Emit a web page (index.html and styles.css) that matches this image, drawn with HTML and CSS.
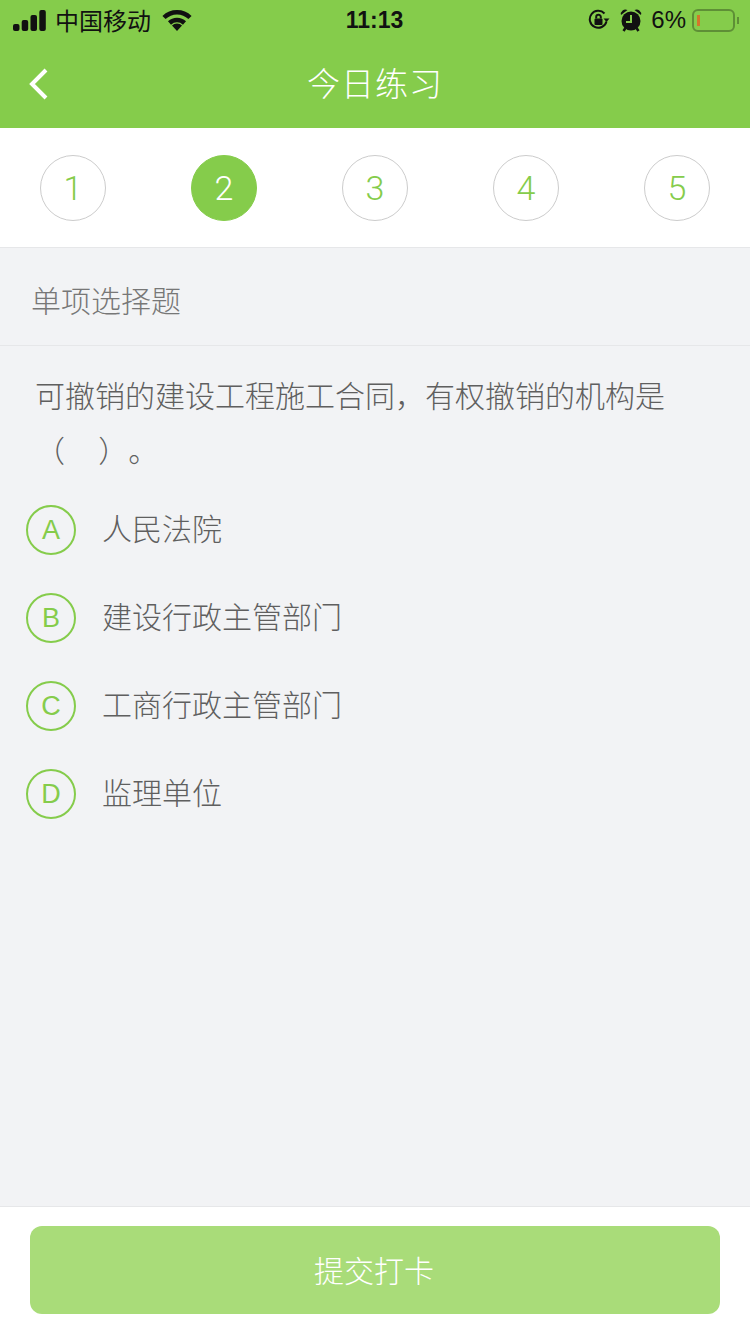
FILE: index.html
```html
<!DOCTYPE html>
<html lang="zh-CN">
<head>
    <meta charset="UTF-8">
    <meta name="viewport" content="width=device-width, initial-scale=1.0">
    <title>今日练习</title>
    <link rel="stylesheet" href="styles.css">
</head>
<body>
    <div class="page">
        <header class="top">
            <div class="status">
                <div class="status-left">
                    <svg class="signal" width="33" height="21" viewBox="0 0 33 21">
                        <rect x="0" y="14" width="6.500" height="7" rx="2"/>
                        <rect x="8.700" y="10" width="6.500" height="11" rx="2"/>
                        <rect x="17.500" y="5" width="6.500" height="16" rx="2"/>
                        <rect x="26.300" y="0" width="6.500" height="21" rx="2"/>
                    </svg>
                    <span class="carrier">中国移动</span>
                    <svg class="wifi" width="30" height="22" viewBox="0 0 30 22">
                        <path class="wifi-arc" d="M2 8.500a18.500 18.500 0 0 1 26 0"/>
                        <path class="wifi-arc" d="M7.500 14a11 11 0 0 1 15 0"/>
                        <path d="M15 22l-5-5.500a7 7 0 0 1 10 0z"/>
                    </svg>
                </div>
                <div class="time">11:13</div>
                <div class="status-right">
                    <svg class="lock" width="22" height="22" viewBox="0 0 22 22">
                        <path class="lock-ring" d="M18.500 12.500A8.500 8.500 0 1 1 16.500 4.500"/>
                        <path d="M15.500 9.500h6l-3 3.500z"/>
                        <rect x="6.500" y="9.500" width="8" height="6.500" rx="1"/>
                        <path class="lock-hook" d="M8.200 9.500V8a2.300 2.300 0 0 1 4.600 0v1.500"/>
                    </svg>
                    <svg class="alarm" width="22" height="24" viewBox="0 0 22 24">
                        <circle cx="11" cy="13" r="9.500"/>
                        <path d="M1 7a4.500 4.500 0 0 1 6.500-5zM21 7a4.500 4.500 0 0 0-6.500-5z"/>
                        <path class="alarm-foot" d="M3.500 23l2-3M18.500 23l-2-3"/>
                        <path class="alarm-hand" d="M11 7v7H6"/>
                    </svg>
                    <span class="percent">6%</span>
                    <div class="battery"><div class="battery-level"></div></div>
                    <div class="battery-cap"></div>
                </div>
            </div>
            <nav class="bar">
                <svg class="back" width="20" height="32" viewBox="0 0 20 32">
                    <path d="M17 2L3 16l14 14"/>
                </svg>
                <h1>今日练习</h1>
            </nav>
        </header>

        <div class="steps">
            <div class="step">1</div>
            <div class="step active">2</div>
            <div class="step">3</div>
            <div class="step">4</div>
            <div class="step">5</div>
        </div>

        <main class="content">
            <div class="type">单项选择题</div>
            <p class="question">可撤销的建设工程施工合同，有权撤销的机构是（&nbsp;&nbsp;&nbsp;&nbsp;）。</p>
            <ul class="options">
                <li class="option"><span class="letter">A</span><span class="option-text">人民法院</span></li>
                <li class="option"><span class="letter">B</span><span class="option-text">建设行政主管部门</span></li>
                <li class="option"><span class="letter">C</span><span class="option-text">工商行政主管部门</span></li>
                <li class="option"><span class="letter">D</span><span class="option-text">监理单位</span></li>
            </ul>
        </main>

        <footer class="foot">
            <button class="submit">提交打卡</button>
        </footer>
    </div>
</body>
</html>
```

FILE: styles.css
```css
:root {
    --green: #85cc4b;
    --green-light: #a9dc79;
    --bg: #f2f3f5;
    --line: #e6e7e9;
    --text: #5f5f5f;
}
* { box-sizing: border-box; }
html, body { margin: 0; height: 100%; }
body { font-family: "Liberation Sans", "Noto Sans CJK SC", sans-serif; background-color: var(--bg); color: var(--text); text-spacing-trim: space-all; }
.page { height: 1334px; display: flex; flex-direction: column; overflow: hidden; }

/* Cabecera */
.top { background-color: var(--green); height: 128px; flex: none; }
.status { height: 40px; display: grid; grid-template-columns: 1fr auto 1fr; align-items: center; padding: 0 10px 0 13px; color: #111; }
.status-left, .status-right { display: flex; align-items: center; }
.status-right { justify-content: flex-end; }
.signal, .wifi, .alarm { fill: #111; }
.carrier { font-size: 24px; margin-left: 9px; margin-right: 11px; padding-bottom: 2px; }
.wifi-arc { fill: none; stroke: #111; stroke-width: 4.500; }
.time { font-size: 23px; font-weight: 700; margin-right: 4px; }
.lock { fill: #111; margin-right: 10px; }
.lock-ring, .lock-hook { fill: none; stroke: #111; stroke-width: 2; }
.alarm { margin-right: 9px; }
.alarm-foot { fill: none; stroke: #111; stroke-width: 2.500; }
.alarm-hand { fill: none; stroke: var(--green); stroke-width: 2; }
.percent { font-size: 24px; margin-right: 6px; }
.battery { width: 43px; height: 23px; border: 2px solid #5e8f36; border-radius: 6px; padding: 4px 3px; }
.battery-level { width: 3px; height: 100%; background-color: #d2762b; }
.battery-cap { width: 2px; height: 7px; margin-left: 2px; margin-right: 1px; background-color: #5e8f36; }

.bar { height: 88px; position: relative; display: flex; align-items: center; justify-content: center; padding-bottom: 4px; }
.bar h1 { margin: 0; font-size: 33px; font-weight: 300; color: #fff; letter-spacing: 1px; }
.back { position: absolute; left: 29px; top: 28px; fill: none; stroke: #fff; stroke-width: 4; }

/* Pasos */
.steps { flex: none; height: 120px; padding: 27px 40px 0; display: flex; justify-content: space-between; background-color: #fff; border-bottom: 1px solid var(--line); }
.step { width: 66px; height: 66px; border-radius: 50%; border: 1px solid #ccc; color: var(--green); font-family: Roboto, sans-serif; font-weight: 300; font-size: 34px; display: flex; align-items: center; justify-content: center; }
.step.active { background-color: var(--green); border-color: var(--green); color: #fff; }

/* Pregunta */
.content { flex: 1; }
.type { height: 98px; padding: 4px 0 0 31px; display: flex; align-items: center; font-size: 30px; font-weight: 300; color: #777; border-bottom: 1px solid var(--line); }
.question { margin: 23px 0 0; padding: 0 36px 0 35px; font-size: 30px; line-height: 55px; font-weight: 300; }
.options { list-style: none; margin: 7px 0 0; padding: 0 0 0 26px; }
.option { height: 88px; display: flex; align-items: center; gap: 26px; font-size: 30px; font-weight: 300; }
.option-text { padding-bottom: 6px; }
.letter { width: 50px; height: 50px; flex: none; border-radius: 50%; border: 2px solid var(--green); color: var(--green); font-size: 27px; font-weight: 400; display: flex; align-items: center; justify-content: center; }

/* Pie */
.foot { flex: none; height: 128px; padding: 19px 30px 0; background-color: #fff; border-top: 1px solid var(--line); }
.submit { display: block; width: 100%; height: 88px; padding: 0 2px 2px 0; border: none; border-radius: 12px; background-color: var(--green-light); color: #fff; font-family: inherit; font-size: 30px; font-weight: 300; }
```
